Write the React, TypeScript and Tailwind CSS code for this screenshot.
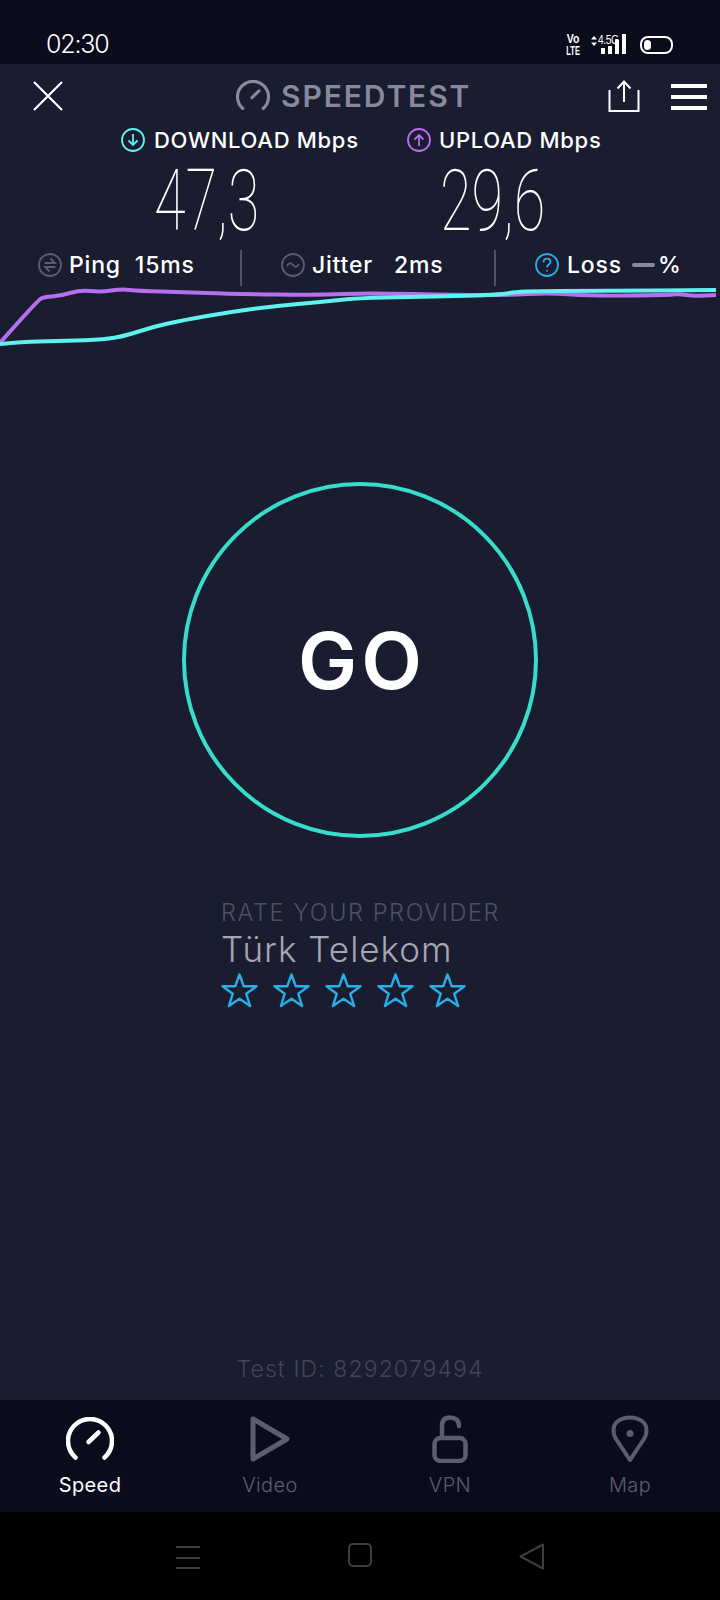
const purple = [
  [-2, 345], [38, 300], [44, 297], [60, 296], [80, 290], [101, 292], [122, 289], [138, 291], [184, 292], [230, 294], [321, 295],
  [367, 293], [459, 295], [505, 295], [551, 293], [592, 296], [666, 295], [680, 294], [693, 296], [716, 295],
]
const cyan = [
  [0, 344], [23, 342], [55, 341], [96, 340], [122, 337], [152, 327], [184, 320], [230, 312], [275, 306], [321, 302],
  [358, 298], [413, 297], [500, 295], [519, 291], [597, 291], [716, 290],
]

// rounds the corners by running through the midpoints
function smooth(pts: number[][]) {
  let d = `M${pts[0][0]} ${pts[0][1]}`
  for (let i = 1; i < pts.length - 1; i++) {
    const mx = (pts[i][0] + pts[i + 1][0]) / 2
    const my = (pts[i][1] + pts[i + 1][1]) / 2
    d += `Q${pts[i][0]} ${pts[i][1]} ${mx} ${my}`
  }
  const last = pts[pts.length - 1]
  return d + `L${last[0]} ${last[1]}`
}

// chart points above are in page pixels, the svg starts at y=286
function Chart() {
  return (
    <svg width="720" height="64" viewBox="0 286 720 64" className="block shrink-0">
      <path d={smooth(purple)} fill="none" stroke="#b76ff0" strokeWidth="4" />
      <path d={smooth(cyan)} fill="none" stroke="#5ff3ee" strokeWidth="4" />
    </svg>
  )
}

function Gauge({ color, width, small }: { color: string; width: number; small?: boolean }) {
  return (
    <svg width={small ? 34 : 48} height={small ? 31 : 44} viewBox="0 0 48 44" fill="none" stroke={color} strokeWidth={width} strokeLinecap="round">
      <path d="M9.5 40.5A22 22 0 1 1 38.5 40.5" />
      <path d="M22.5 25L32.5 15.5" />
    </svg>
  )
}

function Star() {
  return (
    <svg width="37" height="35" viewBox="0 0 37 35" fill="none" stroke="#29aee8" strokeWidth="2.4" strokeLinejoin="round">
      <path d="M18.5 1.5L22.8 13.3H35.5L25.3 20.8L29.1 33L18.5 25.7L7.9 33L11.7 20.8L1.5 13.3H14.2Z" />
    </svg>
  )
}

function Tab({ label, active, children }: { label: string; active?: boolean; children: React.ReactNode }) {
  return (
    <div className="flex flex-col items-center">
      <div className="h-[50px] flex items-center justify-center">{children}</div>
      <span className={`mt-[9px] text-[20px] leading-6 tracking-[0.4px] ${active ? 'text-white font-normal' : 'text-[#5c5e70] font-light'}`}>
        {label}
      </span>
    </div>
  )
}

export default function App() {
  return (
    <div className="w-[720px] h-[1600px] flex flex-col overflow-hidden bg-black font-['Inter',sans-serif]">
      {/* status bar */}
      <div className="h-16 shrink-0 bg-[#0a0c1c] flex items-start text-white">
        <span className="ml-[46px] mt-[28px] w-[62px] text-[25px] leading-[32px] font-light tracking-[-1.2px]">02:30</span>
        <div className="ml-[457px] mt-[35px] flex flex-col items-center w-[16px] font-['Liberation_Sans',sans-serif] font-bold text-[10px] leading-[10px] scale-y-[1.2]">
          <span className="scale-x-[1.05]">Vo</span>
          <span className="scale-x-[0.75]">LTE</span>
        </div>
        <svg className="ml-[10px] mt-[36px]" width="6" height="10" viewBox="0 0 6 10" fill="white">
          <path d="M3 0L6 3.5H0ZM3 10L0 6.5H6Z" />
        </svg>
        <span className="ml-[1px] mt-[35px] w-[17px] font-['Liberation_Sans',sans-serif] text-[12px] leading-[11px] tracking-[-0.5px] origin-left scale-x-[0.85]">4.5G</span>
        <div className="mt-[34px] -ml-[14px] h-5 flex items-end gap-[3.5px]">
          <div className="w-[3.5px] h-[6px] bg-white" />
          <div className="w-[3.5px] h-[8px] bg-white" />
          <div className="w-[3.5px] h-[14px] bg-white" />
          <div className="w-[3.5px] h-5 bg-white" />
        </div>
        <div className="ml-[14px] mt-[36px] w-[33px] h-[18px] rounded-[8px] border-2 border-white p-[2px]">
          <div className="w-[7px] h-full rounded-[4px] bg-white" />
        </div>
      </div>

      {/* main */}
      <div className="h-[1336px] shrink-0 bg-[#1a1c2f] flex flex-col">
        <div className="h-16 shrink-0 pt-4 flex items-start">
          <svg className="ml-[33px] mt-[1px]" width="30" height="30" viewBox="0 0 30 30" stroke="white" strokeWidth="2.2">
            <path d="M1 1L29 29M29 1L1 29" />
          </svg>
          <div className="ml-[173px]">
            <Gauge color="#888a9b" width={4.5} small />
          </div>
          <span className="ml-[11px] w-[188px] whitespace-nowrap text-[30px] leading-[32px] font-semibold text-[#888a9b] tracking-[1.9px]">SPEEDTEST</span>
          <svg className="ml-[139px]" width="32" height="32" viewBox="0 0 32 32" fill="none" stroke="white" strokeWidth="2">
            <path d="M1.5 10V31H30.5V10M16 22V1.5M9.5 8.5L16 1.5L22.5 8.5" />
          </svg>
          <div className="ml-[31px] mt-1 flex flex-col gap-[7px]">
            <div className="w-9 h-1 bg-white" />
            <div className="w-9 h-1 bg-white" />
            <div className="w-9 h-1 bg-white" />
          </div>
        </div>

        <div className="h-6 shrink-0 flex items-center text-white text-[22px] leading-6 font-medium">
          <svg className="ml-[121px]" width="24" height="24" viewBox="0 0 24 24" fill="none" stroke="#5ff3ee" strokeWidth="1.8">
            <circle cx="12" cy="12" r="11" />
            <path d="M12 6V17M7.5 12.5L12 17L16.5 12.5" />
          </svg>
          <span className="ml-[9px] w-[253px] whitespace-nowrap tracking-[0.7px]">DOWNLOAD Mbps</span>
          <svg width="24" height="24" viewBox="0 0 24 24" fill="none" stroke="#b76ff0" strokeWidth="1.8">
            <circle cx="12" cy="12" r="11" />
            <path d="M12 18V7M7.5 11.5L12 7L16.5 11.5" />
          </svg>
          <span className="ml-2 whitespace-nowrap tracking-[0.7px]">UPLOAD Mbps</span>
        </div>

        <div className="h-[98px] shrink-0 flex items-center text-white font-['Roboto',sans-serif] font-thin text-[86px] leading-[98px]">
          <span className="ml-[154px] w-[286px] origin-left scale-x-[0.67] whitespace-nowrap">47,3</span>
          <span className="origin-left scale-x-[0.67] whitespace-nowrap">29,6</span>
        </div>

        <div className="h-9 shrink-0 grid grid-cols-[240px_254px_226px] text-white text-[23px] leading-6 font-medium tracking-[0.8px]">
          <div className="flex items-center pl-[38px] pb-[6px]">
            <svg width="24" height="24" viewBox="0 0 24 24" fill="none" stroke="#5c5e70" strokeWidth="1.8">
              <circle cx="12" cy="12" r="11" />
              <path d="M6.5 10H17L12.5 5.5M17.5 14H7L11.5 18.5" />
            </svg>
            <span className="ml-[7px]">Ping</span>
            <span className="ml-[14px]">15ms</span>
          </div>
          <div className="flex items-center border-l-2 border-[#50526a] pl-[39px] pb-[6px]">
            <svg width="24" height="24" viewBox="0 0 24 24" fill="none" stroke="#5c5e70" strokeWidth="1.8">
              <circle cx="12" cy="12" r="11" />
              <path d="M6 13C8 9 10 9.5 12 12C14 14.5 16 15 18 11" />
            </svg>
            <span className="ml-[7px]">Jitter</span>
            <span className="ml-[21px]">2ms</span>
          </div>
          <div className="flex items-center border-l-2 border-[#50526a] pl-[39px] pb-[6px]">
            <svg width="24" height="24" viewBox="0 0 24 24" fill="none" stroke="#29aee8" strokeWidth="1.8">
              <circle cx="12" cy="12" r="11" />
              <path d="M8.5 9.5C8.5 7 10 5.7 12 5.7C14 5.7 15.5 7 15.5 9C15.5 11.5 12 11.5 12 14.5" />
              <path d="M12 17V18.5" />
            </svg>
            <span className="ml-[8px]">Loss</span>
            <div className="ml-[10px] w-[23px] h-1 rounded-full bg-[#888a9b]" />
            <span className="ml-[3px]">%</span>
          </div>
        </div>

        <Chart />

        <div className="mt-[132px] ml-[182px] w-[356px] h-[356px] shrink-0 rounded-full border-4 border-[#37dccb] flex items-center justify-center">
          <span className="pl-[4px] text-[79px] leading-none font-semibold text-white tracking-[4px]">GO</span>
        </div>

        <div className="ml-[221px] mt-[61px] flex flex-col items-start">
          <span className="text-[23.5px] leading-7 font-light text-[#4f5165] whitespace-nowrap tracking-[1.6px]">RATE YOUR PROVIDER</span>
          <span className="mt-[1px] text-[35px] leading-[42px] font-light text-[#a6a7b2] whitespace-nowrap tracking-[1px]">Türk Telekom</span>
          <div className="mt-[3px] flex gap-[15px]">
            <Star />
            <Star />
            <Star />
            <Star />
            <Star />
          </div>
        </div>

        <div className="mt-auto mb-[17px] text-center text-[23px] leading-7 font-light text-[#43455a] tracking-[1.1px]">Test ID: 8292079494</div>
      </div>

      {/* tabs */}
      <div className="h-28 shrink-0 bg-[#0a0c1c] grid grid-cols-4 pt-[14px]">
        <Tab label="Speed" active>
          <Gauge color="white" width={4.5} />
        </Tab>
        <Tab label="Video">
          <svg width="42" height="48" viewBox="0 0 42 48" fill="none" stroke="#5c5e70" strokeWidth="5" strokeLinejoin="round">
            <path d="M4 4L38 24L4 44Z" />
          </svg>
        </Tab>
        <Tab label="VPN">
          <svg width="36" height="48" viewBox="0 0 36 48" fill="none" stroke="#5c5e70" strokeWidth="4.5">
            <path d="M10 22V11C10 5 13 2.5 18 2.5C23 2.5 27 5 27 11" strokeLinecap="round" />
            <rect x="2.5" y="23" width="31" height="23" rx="6" />
          </svg>
        </Tab>
        <Tab label="Map">
          <svg width="38" height="48" viewBox="0 0 38 48" fill="none" stroke="#5c5e70" strokeWidth="4">
            <path d="M19 45L5 24C1 17 2 10 6.5 6.5C13 1 25 1 31.5 6.5C36 10 37 17 33 24Z" strokeLinejoin="round" />
            <circle cx="19" cy="18.5" r="3.5" fill="#5c5e70" stroke="none" />
          </svg>
        </Tab>
      </div>

      {/* system nav */}
      <div className="h-[88px] shrink-0 bg-black flex items-start pt-[31px]">
        <div className="ml-[176px] mt-[3px] w-6 flex flex-col gap-[8.5px]">
          <div className="h-[2px] bg-[#3d3d3d]" />
          <div className="h-[2px] bg-[#3d3d3d]" />
          <div className="h-[2px] bg-[#3d3d3d]" />
        </div>
        <div className="ml-[148px] w-6 h-6 rounded-[5px] border-2 border-[#3d3d3d]" />
        <svg className="ml-[147px]" width="25" height="27" viewBox="0 0 25 27" fill="none" stroke="#3d3d3d" strokeWidth="2" strokeLinejoin="round">
          <path d="M24 1.5V25.5L1.5 13.5Z" />
        </svg>
      </div>
    </div>
  )
}
